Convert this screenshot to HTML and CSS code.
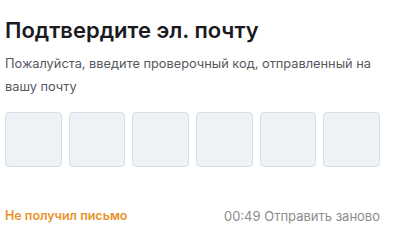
FILE: index.html
```html
<!DOCTYPE html>
<html lang="ru">
<head>
    <meta charset="UTF-8">
    <meta name="viewport" content="width=device-width, initial-scale=1.0">
    <link rel="stylesheet" href="styles.css">
    <title>Подтвердите эл. почту</title>
</head>
<body>

    <div class="confirm">
        <h1 class="title">Подтвердите эл. почту</h1>
        <p class="hint">Пожалуйста, введите проверочный код, отправленный на вашу почту</p>

        <div class="code-row">
            <input type="text" class="code-cell" maxlength="1">
            <input type="text" class="code-cell" maxlength="1">
            <input type="text" class="code-cell" maxlength="1">
            <input type="text" class="code-cell" maxlength="1">
            <input type="text" class="code-cell" maxlength="1">
            <input type="text" class="code-cell" maxlength="1">
        </div>

        <div class="footer">
            <a href="#" class="no-mail">Не получил письмо</a>
            <span class="resend">00:49 Отправить заново</span>
        </div>
    </div>

</body>
</html>
```

FILE: styles.css
```css
body {
    margin: 0;
    padding: 0;
    font-family: 'Inter', 'Roboto', sans-serif;
    background-color: #fff;
}

.confirm {
    width: 375px;
    padding: 16px 0 0 5px;
}

.title {
    margin: 0;
    font-size: 22px;
    font-weight: 600;
    color: #1b1b1f;
    line-height: 28px;
}

.hint {
    margin: 8px 0 0 0;
    font-size: 12.8px;
    line-height: 23px;
    color: #55585e;
}

.code-row {
    display: flex;
    gap: 7px;
    margin-top: 14px;
}

.code-cell {
    flex: 1;
    min-width: 0;
    height: 55px;
    box-sizing: border-box;
    border: 1px solid #d9dde3;
    border-radius: 4px;
    background-color: #eef1f6;
    outline: none;
}

.footer {
    display: flex;
    justify-content: space-between;
    margin-top: 41px;
    font-size: 13px;
}

.no-mail {
    color: #e9922a;
    font-weight: 600;
    font-size: 12.5px;
    text-decoration: none;
}

.resend {
    color: #8a8c90;
}
```
